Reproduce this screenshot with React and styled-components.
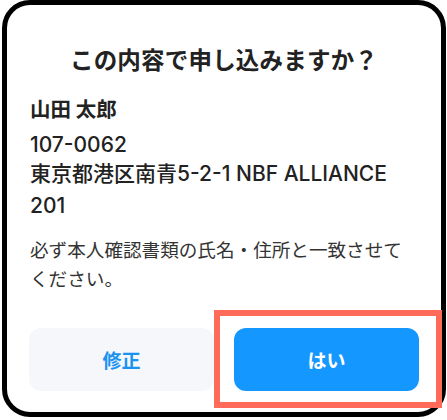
import React from "react";
import styled, { createGlobalStyle } from "styled-components";

const GlobalStyle = createGlobalStyle`
  html, body {
    margin: 0;
    padding: 0;
    background: #ffffff;
  }
  body {
    font-family: "Noto Sans CJK JP", "Noto Sans", sans-serif;
    color: #222222;
  }
`;

const Card = styled.div`
  position: relative;
  box-sizing: border-box;
  width: 444px;
  margin-left: 2px;
  border: 5px solid #000000;
  border-radius: 28px;
  background: #ffffff;
  padding: 38px 22px 21px 22px;
`;

const Title = styled.h2`
  margin: 0;
  font-size: 23.5px;
  line-height: 32px;
  font-weight: 700;
  letter-spacing: 0.2px;
  text-align: center;
  color: #222222;
`;

const Info = styled.div`
  margin-top: 20px;
  padding-left: 1px;
  font-family: Inter, "Noto Sans CJK JP", sans-serif;
`;

const Line = styled.div`
  font-size: ${(p) => (p.$bold ? 20.5 : 21)}px;
  line-height: ${(p) => p.$lh || 30}px;
  font-weight: ${(p) => (p.$bold ? 700 : 500)};
  margin-top: ${(p) => p.$mt || 0}px;
  color: #222222;
`;

const Note = styled.p`
  margin: 13px 12px 0 1px;
  font-size: 18.6px;
  line-height: 28.5px;
  font-weight: 400;
  color: #333333;
`;

const Actions = styled.div`
  margin-top: 36px;
  display: grid;
  grid-template-columns: 1fr 1fr;
  gap: 20px;
`;

const Slot = styled.div`
  position: relative;
`;

const Button = styled.button`
  width: 100%;
  height: 63px;
  border: none;
  border-radius: 12px;
  font-family: inherit;
  font-size: 19px;
  font-weight: 700;
  cursor: pointer;
  background: ${(p) => (p.$primary ? "#1497fe" : "#f5f7fa")};
  color: ${(p) => (p.$primary ? "#ffffff" : "#1a93f0")};
`;

const Highlight = styled.div`
  position: absolute;
  top: -18px;
  right: -23px;
  bottom: -17px;
  left: -20px;
  border: 6px solid #ff6b58;
  pointer-events: none;
`;

export default function App() {
  return (
    <>
      <GlobalStyle />
      <Card>
        <Title>この内容で申し込みますか？</Title>
        <Info>
          <Line $bold>山田 太郎</Line>
          <Line $mt={5}>107-0062</Line>
          <Line $lh={32} $mt={-2}>
            東京都港区南青5-2-1 NBF ALLIANCE
            <br />
            201
          </Line>
        </Info>
        <Note>必ず本人確認書類の氏名・住所と一致させてください。</Note>
        <Actions>
          <Slot>
            <Button>修正</Button>
          </Slot>
          <Slot>
            <Button $primary>はい</Button>
            <Highlight />
          </Slot>
        </Actions>
      </Card>
    </>
  );
}
